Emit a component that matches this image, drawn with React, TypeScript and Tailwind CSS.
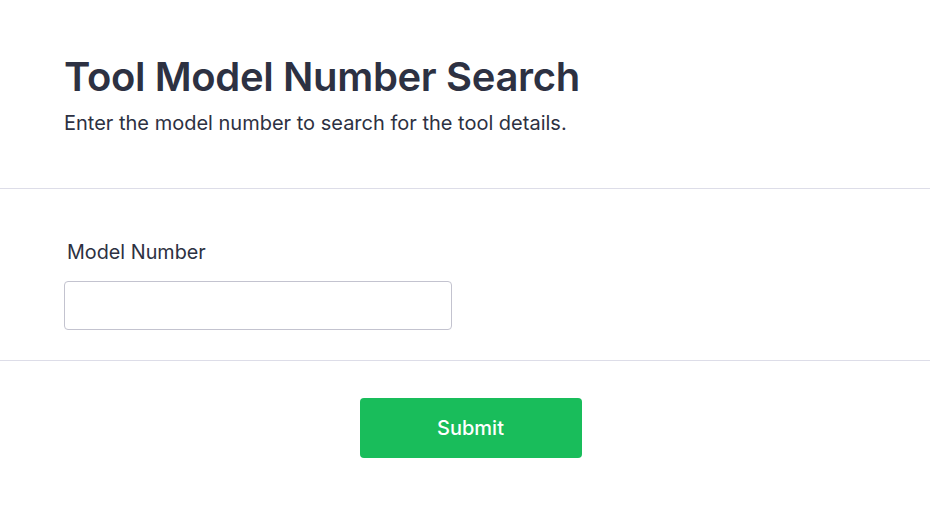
import React from 'react';

export default function App() {
  return (
    <div className="min-h-screen bg-white text-[#2d3142]" style={{ fontFamily: 'Inter, "Noto Sans", sans-serif' }}>
      <header className="px-16 pt-[53px] pb-[51px]">
        <h1 className="text-[40px] font-semibold leading-[48px] tracking-[-0.35px]">Tool Model Number Search</h1>
        <p className="mt-[8px] text-[20px] leading-7">Enter the model number to search for the tool details.</p>
      </header>
      <section className="border-y border-[#dddde8] px-16 pt-[49px] pb-[30px]">
        <label htmlFor="model" className="block pl-[3px] text-[19.8px] leading-7">Model Number</label>
        <input
          id="model"
          type="text"
          className="mt-[15px] h-[49px] w-[388px] rounded-[4px] border border-[#c3c3cf] px-3 text-[18px] outline-none"
        />
      </section>
      <div className="flex justify-center pt-[37px] pl-[11px]">
        <button className="h-[60px] w-[222px] rounded-[4px] bg-[#19bd5b] text-[20px] font-medium text-white">Submit</button>
      </div>
    </div>
  );
}
